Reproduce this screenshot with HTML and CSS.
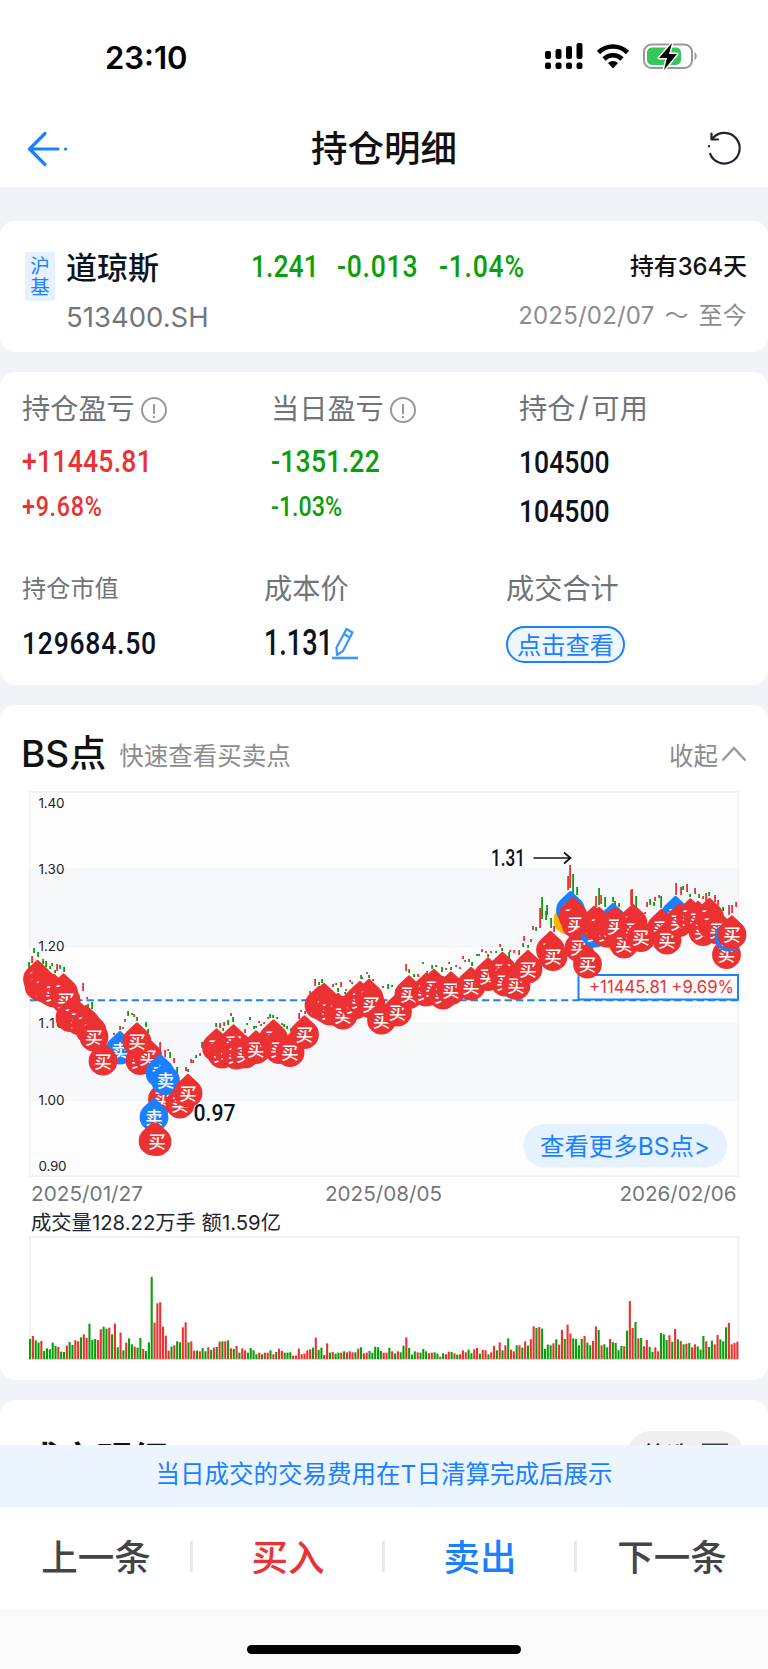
FILE: index.html
```html
<!DOCTYPE html>
<html lang="zh-CN">
<head>
    <meta charset="UTF-8">
    <meta name="viewport" content="width=device-width, initial-scale=1.0">
    <title>持仓明细</title>
    <link rel="stylesheet" href="styles.css">
</head>
<body>
    <!-- 状态栏 -->
    <div class="status-bar">
        <span class="time">23:10</span>
        <svg class="status-icons" width="156" height="30" viewBox="0 0 156 30">
            <g fill="#000">
                <rect x="1" y="9" width="6" height="8" rx="2"/>
                <rect x="11.500" y="7" width="6" height="10" rx="2"/>
                <rect x="22" y="4" width="6" height="13" rx="2"/>
                <rect x="32.500" y="1" width="6" height="16" rx="2"/>
                <rect x="1" y="20.500" width="6" height="6.500" rx="2"/>
                <rect x="11.500" y="20.500" width="6" height="6.500" rx="2"/>
                <rect x="22" y="20.500" width="6" height="6.500" rx="2"/>
                <rect x="32.500" y="20.500" width="6" height="6.500" rx="2"/>
                <path d="M64 21a7 7 0 0 1 10 0l-5 5.500z"/>
            </g>
            <path d="M54.500 10.500a20.500 20.500 0 0 1 29 0M60 17a12.800 12.800 0 0 1 18 0" fill="none" stroke="#000" stroke-width="4.600"/>
            <rect x="100" y="2.500" width="48" height="23.500" rx="7.500" fill="none" stroke="#999" stroke-width="2"/>
            <path d="M150.500 10.500c3 1 3 6.500 0 7.500z" fill="#999"/>
            <rect x="103" y="5.500" width="34" height="17.500" rx="5" fill="#34c759"/>
            <path d="M128 1L115 16h8l-3 12 13-16h-8z" fill="#000" stroke="#fff" stroke-width="3" paint-order="stroke" stroke-linejoin="round"/>
        </svg>
    </div>

    <!-- 标题栏 -->
    <div class="nav-bar">
        <svg width="44" height="38" viewBox="0 0 44 38" fill="none" stroke="#1a80ff" stroke-width="3.200" stroke-linecap="round" stroke-linejoin="round">
            <path d="M19 3.500L3.500 19 19 34.500M4 19h28M39.500 19h.2"/>
        </svg>
        <h1>持仓明细</h1>
        <svg width="36" height="38" viewBox="0 0 36 38" fill="none" stroke="#20242c" stroke-width="2.200" stroke-linecap="round" stroke-linejoin="round">
            <path d="M4.200 24A15.300 15.300 0 1 0 7 8M5.500 3.500v6h6.500M3 16.200v.2"/>
        </svg>
    </div>

    <div class="content">
        <!-- 股票信息 -->
        <div class="card stock">
            <div class="badge">沪<br>基</div>
            <div class="stock-main">
                <div class="stock-name">道琼斯</div>
                <div class="stock-code">513400.SH</div>
            </div>
            <div class="prices">
                <span class="num green">1.241</span>
                <span class="num wide green">-0.013</span>
                <span class="num wide green">-1.04%</span>
            </div>
            <div class="hold">
                <div class="hold-days">持有364天</div>
                <div class="hold-date">2025/02/07 ～ 至今</div>
            </div>
        </div>

        <!-- 持仓数据 -->
        <div class="card position">
            <div class="row row-top">
                <div class="cell">
                    <div class="label">持仓盈亏<i class="info"></i></div>
                    <span class="num long red">+11445.81</span>
                    <span class="num small wide red">+9.68%</span>
                </div>
                <div class="cell">
                    <div class="label">当日盈亏<i class="info"></i></div>
                    <span class="num long green">-1351.22</span>
                    <span class="num small green">-1.03%</span>
                </div>
                <div class="cell amount">
                    <div class="label">持仓<span class="slash">/</span>可用</div>
                    <span class="num">104500</span>
                    <span class="num">104500</span>
                </div>
            </div>
            <div class="row row-bottom">
                <div class="cell">
                    <div class="label label-small">持仓市值</div>
                    <span class="num wide">129684.50</span>
                </div>
                <div class="cell">
                    <div class="label">成本价</div>
                    <div class="cost">
                        <span class="num big">1.131</span>
                        <svg width="28" height="34" viewBox="0 0 28 34" fill="none" stroke="#3d95ff" stroke-width="2.200" stroke-linejoin="round">
                            <path d="M15.500 3l6 3.500L12 25l-6 4-.5-7.500zM13 8l6 3.500"/>
                            <path d="M1 32h26" stroke-width="2.600"/>
                        </svg>
                    </div>
                </div>
                <div class="cell">
                    <div class="label">成交合计</div>
                    <button class="view-btn">点击查看</button>
                </div>
            </div>
        </div>

        <!-- BS点图表 -->
        <div class="card chart-card">
            <div class="chart-head">
                <h2>BS点</h2>
                <span class="sub">快速查看买卖点</span>
                <span class="fold">收起</span>
                <svg width="26" height="18" viewBox="0 0 26 18" fill="none" stroke="#999" stroke-width="2.400"><path d="M1.500 15.500L13 3l11.500 12.500"/></svg>
            </div>
            <svg id="chart" class="chart" viewBox="0 785 768 590" width="768" height="590">
                <rect x="29.500" y="791.500" width="709" height="384" fill="#fdfdfe"/>
                <rect x="30" y="869" width="708" height="77" fill="#f7f8fc"/>
                <rect x="30" y="1023" width="708" height="77" fill="#f7f8fc"/>
                <path d="M30 869h708M30 946.500h708M30 1023h708M30 1100h708" stroke="#f1f2f5"/>
                <rect x="29.800" y="792" width="708.500" height="384" fill="none" stroke="#eff0f3" stroke-width="1.500"/>
                <g class="axis">
                    <text x="38.500" y="807.500" textLength="26">1.40</text>
                    <text x="38.500" y="873.500" textLength="26">1.30</text>
                    <text x="38.500" y="950.500" textLength="26">1.20</text>
                    <text x="38.500" y="1027.500" textLength="26">1.10</text>
                    <text x="38.500" y="1104.500" textLength="26">1.00</text>
                    <text x="38.500" y="1170.500" textLength="28">0.90</text>
                </g>
                <path d="M30 1000.300h708" stroke="#1a80ff" stroke-width="2" stroke-dasharray="7.300 4"/>
                <rect x="578.500" y="975" width="159.500" height="24.500" fill="#fff" stroke="#1a80ff" stroke-width="2"/>
                <text class="profit" x="589" y="993" textLength="145" lengthAdjust="spacingAndGlyphs">+11445.81 +9.69%</text>
                <g id="candles"></g>
                <g id="markers"></g>
                <text class="peak" x="491" y="866" textLength="34" lengthAdjust="spacingAndGlyphs">1.31</text>
                <path d="M533.500 858h37M564 852.500l6.500 5.500-6.500 5.500" fill="none" stroke="#0b1220" stroke-width="1.700"/>
                <text class="peak" x="193.500" y="1121" textLength="42" lengthAdjust="spacingAndGlyphs">0.97</text>
                <rect x="523.500" y="1124" width="203.500" height="43.500" rx="21.700" fill="#e5f1fe"/>
                <text class="more" x="540" y="1154.500" textLength="170" lengthAdjust="spacingAndGlyphs">查看更多BS点&gt;</text>
                <g class="date">
                    <text x="31" y="1201" textLength="112" lengthAdjust="spacingAndGlyphs">2025/01/27</text>
                    <text x="325" y="1201" textLength="117" lengthAdjust="spacingAndGlyphs">2025/08/05</text>
                    <text x="619.500" y="1201" textLength="117" lengthAdjust="spacingAndGlyphs">2026/02/06</text>
                </g>
                <text class="volume-text" x="31" y="1229.500" textLength="250" lengthAdjust="spacingAndGlyphs">成交量128.22万手 额1.59亿</text>
                <path d="M30 1359V1237h708.300v122" fill="none" stroke="#eff0f3" stroke-width="1.800"/>
                <g id="volume"></g>
            </svg>
        </div>

        <!-- 成交明细 -->
        <div class="card detail">
            <h2>成交明细</h2>
            <div class="filter">筛选
                <svg width="26" height="24" viewBox="0 0 26 24" fill="none" stroke="#3c4048" stroke-width="3"><path d="M1 2h24L16 12v10l-6-3v-7z"/></svg>
            </div>
        </div>
    </div>

    <!-- 底部操作栏 -->
    <div class="notice">当日成交的交易费用在T日清算完成后展示</div>
    <div class="actions">
        <div class="action">上一条</div>
        <div class="action red">买入</div>
        <div class="action blue">卖出</div>
        <div class="action">下一条</div>
    </div>
    <div class="home"><div class="home-bar"></div></div>

    <script src="chart.js"></script>
</body>
</html>
```
FILE: styles.css
```css
* {
    box-sizing: border-box;
}
body {
    margin: 0;
    width: 768px;
    height: 1669px;
    display: flex;
    flex-direction: column;
    overflow: hidden;
    background-color: #f2f3f8;
    color: #0b1220;
    font-family: Inter, "Noto Sans CJK SC", sans-serif;
}
h1, h2 {
    margin: 0;
    font-weight: 500;
    color: #111;
}
.red {
    color: #eb3131;
}
.green {
    color: #0a9f0a;
}
.blue {
    color: #1a80ff;
}

/* 状态栏 */
.status-bar {
    height: 110px;
    flex: none;
    display: flex;
    justify-content: space-between;
    align-items: flex-start;
    padding: 42px 68px 0 105px;
    background-color: #fff;
}
.time {
    font-size: 31px;
    line-height: 31px;
    font-weight: 600;
    color: #000;
}

/* 标题栏 */
.nav-bar {
    height: 77px;
    flex: none;
    display: flex;
    justify-content: space-between;
    align-items: center;
    padding: 0 26px 0 26px;
    background-color: #fff;
}
.nav-bar h1 {
    font-size: 36.5px;
    line-height: 50px;
    margin-left: -8px;
}

.content {
    flex: 1;
    min-height: 0;
    overflow: hidden;
    padding-top: 34px;
}
.card {
    background-color: #fff;
    border-radius: 15px;
    margin-bottom: 20px;
}

/* 数字字体压窄 */
.num {
    display: block;
    font-family: Roboto, sans-serif;
    font-size: 32px;
    line-height: 46px;
    font-weight: 500;
    white-space: nowrap;
    transform: scaleX(0.83);
    transform-origin: left center;
}
.num.wide {
    letter-spacing: 0.9px;
}
.num.long {
    letter-spacing: 0.3px;
}
.num.small {
    font-size: 28px;
}
.num.big {
    font-size: 36px;
    transform: scaleX(0.75);
}

/* 股票信息 */
.stock {
    height: 131px;
    display: flex;
    align-items: flex-start;
    padding: 22px 21px 0 25px;
}
.badge {
    width: 30px;
    height: 49px;
    margin-top: 9px;
    padding-top: 4px;
    border-radius: 2px;
    background-color: #e5f1fe;
    color: #1a80ff;
    font-size: 19.5px;
    line-height: 21px;
    text-align: center;
}
.stock-main {
    width: 185px;
    margin-left: 11px;
}
.stock-name {
    font-size: 31px;
    line-height: 50px;
    font-weight: 500;
}
.stock-code {
    color: #73777c;
    font-size: 27.5px;
    line-height: 48px;
}
.prices {
    display: grid;
    grid-template-columns: 86px 102px 90px;
}
.hold {
    flex: 1;
    text-align: right;
    white-space: nowrap;
}
.hold-days {
    font-size: 23.8px;
    line-height: 48px;
    font-weight: 500;
    color: #111;
}
.hold-date {
    margin-left: -80px;
    font-size: 24px;
    line-height: 50px;
    letter-spacing: 0.2px;
    word-spacing: 3px;
    color: #8c8c8c;
}

/* 持仓数据 */
.position {
    height: 313px;
    padding: 13px 22px 0;
}
.row {
    display: grid;
}
.row-top {
    grid-template-columns: 249px 248px 1fr;
    height: 180px;
}
.row-bottom {
    grid-template-columns: 242px 242px 1fr;
}
.label {
    display: flex;
    align-items: center;
    height: 43px;
    margin-bottom: 10px;
    font-size: 28.2px;
    color: #707478;
}
.row-bottom .label {
    margin-bottom: 12px;
}
.row-bottom .label-small {
    font-size: 24.2px;
}
.slash {
    margin: 0 3px;
}
.amount .label {
    margin-bottom: 10px;
}
.amount .num {
    line-height: 49px;
}
.info {
    position: relative;
    width: 26px;
    height: 26px;
    margin: 7px 0 0 6px;
    border: 2px solid #999;
    border-radius: 50%;
}
.info::before {
    content: "";
    position: absolute;
    left: 10px;
    top: 5px;
    width: 2px;
    height: 10px;
    background-color: #999;
}
.info::after {
    content: "";
    position: absolute;
    left: 10px;
    top: 17px;
    width: 2px;
    height: 2px;
    background-color: #999;
}
.cost {
    display: flex;
    height: 46px;
}
.cost .num {
    width: 67px;
}
.cost svg {
    margin-top: 6px;
}
.view-btn {
    display: block;
    width: 119px;
    height: 37px;
    margin-top: 18px;
    padding: 0;
    border: 2px solid #1a80ff;
    border-radius: 19px;
    background-color: #eef6ff;
    color: #1a80ff;
    font-family: inherit;
    font-size: 24.3px;
    line-height: 32px;
}

/* 图表 */
.chart-card {
    height: 675px;
}
.chart-head {
    height: 80px;
    display: flex;
    align-items: center;
    padding: 18px 21px 0;
}
.chart-head h2 {
    font-size: 37px;
    line-height: 50px;
}
.sub {
    flex: 1;
    margin-left: 13px;
}
.sub, .fold {
    font-size: 24.5px;
    color: #8c8c8c;
}
.fold {
    margin-right: 3px;
}
.chart {
    display: block;
}
.axis text {
    font-size: 13.5px;
    fill: #20242c;
}
.profit {
    font-size: 17px;
    fill: #eb3131;
}
.peak {
    font-family: Roboto, sans-serif;
    font-size: 23.5px;
    font-weight: 500;
    fill: #0b1220;
}
.more {
    font-size: 24px;
    fill: #1a80ff;
}
.date text {
    font-size: 20.5px;
    fill: #73777c;
}
.volume-text {
    font-size: 20px;
    fill: #20242c;
}
.marker text {
    font-size: 17.5px;
    font-weight: 500;
    fill: #fff;
    text-anchor: middle;
}

/* 成交明细 */
.detail {
    height: 200px;
    display: flex;
    justify-content: space-between;
    align-items: flex-start;
    padding: 31px 24px 0;
}
.detail h2 {
    margin-top: 4px;
    font-size: 36px;
    line-height: 50px;
    font-weight: 700;
}
.filter {
    display: flex;
    align-items: center;
    justify-content: center;
    gap: 12px;
    width: 117px;
    height: 48px;
    border-radius: 24px;
    background-color: #efefef;
    font-size: 23px;
    line-height: 48px;
    font-weight: 500;
}

/* 底部 */
.notice {
    height: 62px;
    flex: none;
    background-color: #ecf5ff;
    color: #1a80ff;
    font-size: 24.5px;
    line-height: 58px;
    text-align: center;
}
.actions {
    height: 102px;
    flex: none;
    display: flex;
    align-items: center;
    padding-bottom: 5px;
    background-color: #fff;
}
.action {
    position: relative;
    flex: 1;
    font-size: 36.5px;
    font-weight: 500;
    text-align: center;
}
.action:not(.red):not(.blue) {
    color: #444;
}
.action + .action::before {
    content: "";
    position: absolute;
    left: -2px;
    top: 12px;
    width: 3px;
    height: 31px;
    background-color: #e8e9ec;
}
.home {
    height: 60px;
    flex: none;
    padding-top: 36px;
    background-color: #fafafa;
}
.home-bar {
    width: 274px;
    height: 9px;
    margin: 0 auto;
    border-radius: 5px;
    background-color: #000;
}
```
FILE: chart.js
```js
const RED = '#eb3131';
const GREEN = '#0a9f0a';
const BLUE = '#1a80ff';
const YELLOW = '#ffb400';

// K线：x 最高 最低 颜色
const candles = `29 962 968 g,32 956 963 r,34 948 953 g,38 952 957 g,43 959 964 g,46 961 967 g,50 966 969 g,52 963 966 g,55 970 973 g,57 964 971 r,60 965 969 g,64 967 972 g,
83 983 991 r,87 997 999 r,88 1004 1010 g,92 1002 1009 g,114 1033 1035 r,120 1026 1030 r,123 1027 1029 g,125 1019 1022 r,128 1011 1016 g,132 1013 1015 g,134 1014 1017 r,137 1017 1021 g,146 1022 1027 g,148 1029 1033 g,
160 1042 1052 r,165 1050 1057 r,168 1049 1051 r,170 1052 1058 g,174 1058 1063 r,177 1067 1073 g,186 1067 1071 r,188 1069 1072 g,191 1059 1063 r,193 1060 1063 r,196 1055 1058 g,200 1053 1056 r,202 1042 1048 g,
216 1023 1027 g,220 1023 1028 r,223 1028 1031 g,224 1022 1026 r,228 1020 1025 g,231 1013 1016 r,233 1017 1022 g,245 1029 1033 r,247 1023 1025 g,250 1017 1020 g,254 1026 1029 g,256 1026 1028 g,259 1021 1023 r,261 1024 1026 r,264 1022 1024 r,268 1017 1019 r,270 1014 1018 g,273 1015 1018 g,277 1017 1019 g,282 1023 1025 r,284 1024 1027 g,287 1026 1029 g,291 1028 1031 g,299 1013 1019 r,301 1010 1012 r,305 1011 1014 r,
310 991 994 r,315 979 986 r,319 982 985 g,322 979 983 g,333 984 987 r,336 983 985 g,338 988 992 g,341 982 987 r,345 992 994 g,346 989 991 r,350 980 982 r,352 982 984 r,361 975 979 g,362 977 979 r,367 972 974 r,369 975 978 g,373 979 981 r,383 986 988 r,388 984 989 g,392 985 987 g,396 989 991 r,401 983 985 g,406 964 971 r,409 969 973 g,414 974 977 g,418 974 977 r,423 962 964 g,427 971 974 r,432 965 969 g,436 965 967 g,442 967 972 g,446 968 970 r,
449 962 964 r,451 967 970 g,456 965 967 r,460 967 969 r,463 956 959 r,465 960 962 r,469 959 962 g,472 962 966 g,477 954 956 g,479 954 956 g,482 949 952 r,486 951 953 r,488 954 957 g,491 951 953 r,496 951 953 g,500 944 947 r,502 948 951 g,509 952 959 g,510 950 952 r,514 950 953 r,519 950 955 r,523 943 947 g,524 936 941 r,528 945 948 g,531 939 942 r,533 926 930 r,536 927 931 g,
540 908 928 r,542 897 919 g,546 911 920 g,547 905 915 g,551 918 928 g,554 926 932 r,568 876 890 r,570 865 888 r,573 874 893 g,577 887 895 g,596 896 907 r,599 888 905 g,601 895 904 r,605 897 907 g,613 897 902 g,615 901 905 g,619 903 907 g,631 890 905 r,632 889 906 r,636 896 907 g,645 912 914 r,647 902 907 r,650 899 905 g,654 902 906 g,655 897 901 r,659 895 898 r,661 896 908 g,676 883 895 r,681 887 895 r,683 886 890 g,687 884 892 r,690 894 897 g,695 888 894 r,699 894 898 g,703 896 899 r,706 893 901 r,709 892 896 g,715 895 902 r,718 900 905 r,723 907 911 g,729 905 915 r,732 905 913 r,736 902 907 r`;

// 买卖点：x y 类型（b买 s卖 t做T），按绘制顺序
const markers = `37.5 979 b,39 986 b,44 988 b,50 991 b,54 993 b,63.5 992.5 b,66 1000 b,70 1017.5 b,73 1016 b,79 1020.5 b,86 1024 b,90 1030 b,92 1031 b,94 1037 b,
120 1050 s,103 1061 b,140 1060.5 b,148 1057 b,137 1041.5 b,162.5 1099 b,160 1073 s,165.5 1080.5 s,180 1104 b,188 1093 b,154 1117 s,153 1141 b,157 1141.5 b,
216.5 1047.5 b,222 1054 b,229 1051 b,233.5 1043.5 b,236.5 1055 b,245 1054 b,256 1049.5 b,273.5 1038.5 b,277 1047 b,279 1049.5 b,290 1052.5 b,304.5 1034.5 b,
319 1005 b,324 1002 b,325 1008 b,330 1011 b,338 1012 b,343 1015 b,355 1005 b,360 1000 b,369 998 b,371 1004 b,381.5 1020 b,397.5 1012 b,409 994.5 b,426 992 b,434 988 b,443 995 b,451 990.5 b,471 986 b,488 976.5 b,502.5 971 b,505 982 b,516 985.5 b,528 969 b,550.5 950 b,553 956.5 b,
568 920 t,570.5 910 s,573 916 b,576 924 b,579 947.5 b,587.5 964 b,595 933 s,614 935 t,613 922 s,627 929 s,594 925 b,599 926 b,604 931 b,607 933 b,612 928 b,616 926 b,624 944 b,633 923 b,634 930 b,641 937.5 b,
675.5 915 s,661.5 928 b,667 940 b,679 922.5 b,690.5 917.5 b,698 920 b,703 931.5 b,709.5 917 b,712 925 b,718 930 b,726.5 954.5 b,729 937 s,732 934.5 b`;

// 成交量
const volumes = `61g 70r 57g 50g 55r 25g 33g 30g 50g 40g 37r 23g 22g 41r 52g 43g 57r 54r 66g 75r 64r 107g 58g 61g 58r 90r 98g 92g 95r 75g 107r 36g 80r 27g 50r 63g 45g 38r 35g 64g 31r 25g 51g 247g 110r 168r 171r 98r 71r 26r 38g 42r 54g 51g 96r 111r 51g 54r 26r 26g 24r 34g 24g 36r 28g 35r 37g 53r 54g 54r 57g 33r 31g 40r 20g 33r 27r 20g 34g 27g 15g 20r 15g 20r 20r 27g 15r 22g 32r 25r 20g 20g 21g 11r 11r 32r 15r 17r 27r 30r 35g 65r 28g 35g 13r 48r 20g 22r 17g 20g 20r 24g 21r 24r 21r 21g 32r 36g 18r 20r 25g 20g 38g 36g 25g 20r
20r 34g 24r 17g 24r 21g 41g 66r 34g 14g 24g 21r 20g 31g 24g 18r 20r 21g 17g 8r 18g 15r 23r 22g 18r 14g 15r 27r 21r 29g 18g 30r 34r 17g 28r 27r 15g 21r 40r 27g 51r 27g 42r 63g 29r 24r 42g 42r 35g 54r 41g 60r 99r 94g 97r 92g 31g 44g 42g 48r 60g 44r 88r 61g 104r 77r 63g 61g 42g 61g 70r 50g 42g 55r 99r 88g 42r 45g 36g 61r 51g 49g 27g 40g 39r 86g 175r 94r 112g 63r 64g 39r 58r 37g 22g 36r 24r 79g 75g 58g 72r 53g 91r 60g 55r 45g 47r 49g 36r 45r 39g 29g 70g 54r 37g 56g 45r 73r 60g 54g 96g 109r 45r 49r 53r`;

// 画K线
let html = '';
candles.split(',').forEach(item => {
    const [x, top, bottom, c] = item.trim().split(' ');
    html += `<rect x="${x - 0.8}" y="${top}" width="1.8" height="${bottom - top}" fill="${c === 'r' ? RED : GREEN}"/>`;
});
document.getElementById('candles').innerHTML = html;

// 画买卖点水滴
html = '';
markers.split(',').forEach(item => {
    const [x, y, type] = item.trim().split(' ');
    const color = {b: RED, s: BLUE, t: YELLOW}[type];
    const word = {b: '买', s: '卖', t: 'T'}[type];
    html += `<g class="marker" transform="translate(${x} ${y})">
        <path d="M-10.300 -10L-1.200 -18.600Q0 -19.700 1.200 -18.600L10.300 -10A14.400 14.400 0 1 1 -10.300 -10Z" fill="${color}"/>
        <text y="6.500">${word}</text>
    </g>`;
});
document.getElementById('markers').innerHTML = html;

// 画成交量柱，末柱贴右边框
html = '';
const bars = volumes.split(/\s+/);
const step = 707.3 / (bars.length - 1);
bars.forEach((item, i) => {
    const h = parseInt(item) / 3;
    html += `<rect x="${29 + i * step}" y="${1359.3 - h}" width="2.1" height="${h}" fill="${item.endsWith('r') ? RED : GREEN}"/>`;
});
document.getElementById('volume').innerHTML = html;
```
